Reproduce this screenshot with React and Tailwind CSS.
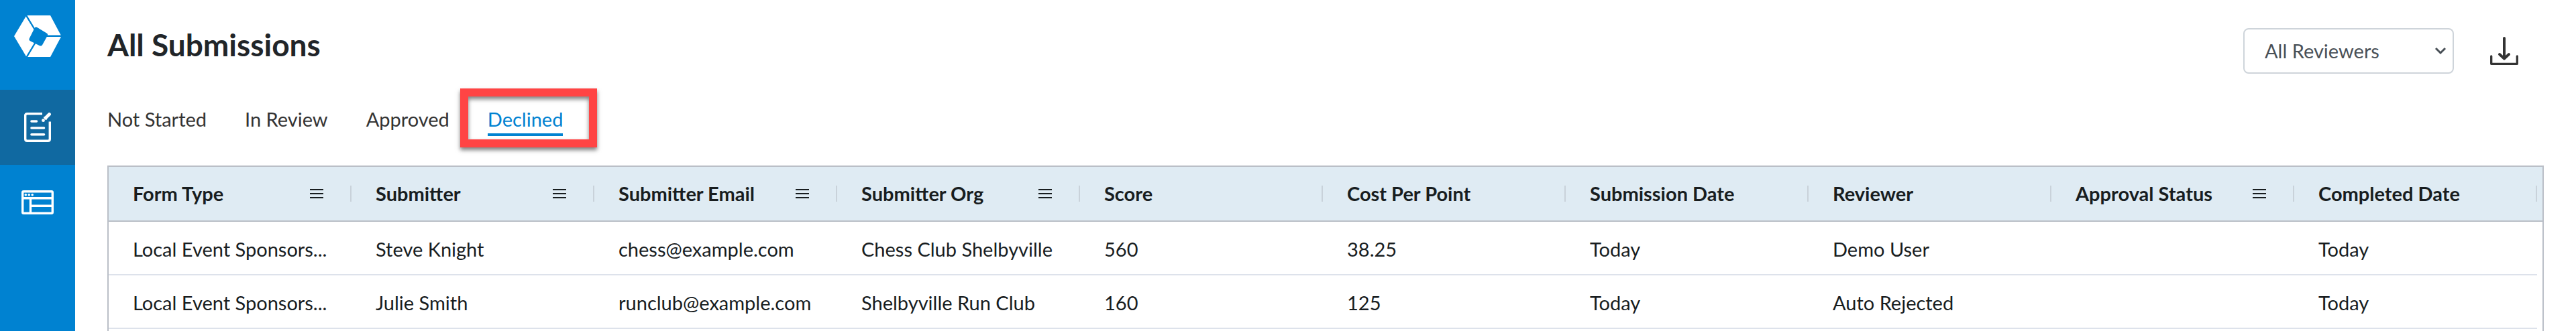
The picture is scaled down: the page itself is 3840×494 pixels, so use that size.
import React, { useState } from "react";

const columns = [
  { key: "formType", label: "Form Type", menu: true },
  { key: "submitter", label: "Submitter", menu: true },
  { key: "email", label: "Submitter Email", menu: true },
  { key: "org", label: "Submitter Org", menu: true },
  { key: "score", label: "Score" },
  { key: "cost", label: "Cost Per Point" },
  { key: "submitted", label: "Submission Date" },
  { key: "reviewer", label: "Reviewer" },
  { key: "approval", label: "Approval Status", menu: true },
  { key: "completed", label: "Completed Date" },
];

const rows = [
  {
    formType: "Local Event Sponsors...",
    submitter: "Steve Knight",
    email: "chess@example.com",
    org: "Chess Club Shelbyville",
    score: "560",
    cost: "38.25",
    submitted: "Today",
    reviewer: "Demo User",
    approval: "",
    completed: "Today",
  },
  {
    formType: "Local Event Sponsors...",
    submitter: "Julie Smith",
    email: "runclub@example.com",
    org: "Shelbyville Run Club",
    score: "160",
    cost: "125",
    submitted: "Today",
    reviewer: "Auto Rejected",
    approval: "",
    completed: "Today",
  },
];

const tabs = ["Not Started", "In Review", "Approved", "Declined"];

const Logo = () => (
  <svg width="72" height="64" viewBox="19 22 72 64" aria-hidden="true">
    <path d="M38.5 23H74L90.5 54L74 85H38.5L20 54Z" fill="#fff" />
    <path
      d="M36.5 20.5L52 46M66 53.7H92M52 63L37 88"
      stroke="#0082d1"
      strokeWidth="2.4"
    />
    <path
      d="M53 43.5L67 52L59.5 65.5L45.5 58.5Z"
      fill="#0082d1"
      stroke="#0082d1"
      strokeWidth="6"
      strokeLinejoin="round"
    />
  </svg>
);

const FormIcon = () => (
  <svg
    width="40"
    height="44"
    viewBox="0 0 40 44"
    fill="none"
    stroke="#fff"
    aria-hidden="true"
  >
    <path
      d="M27 1.7H4.5Q1.7 1.7 1.7 4.5V39.5Q1.7 42.3 4.5 42.3H35.5Q38.3 42.3 38.3 39.5V13.5"
      strokeWidth="3.4"
    />
    <path
      d="M11 13H18.5M11 23H29.5M11 32.7H29.5"
      strokeWidth="3.6"
      strokeLinecap="round"
    />
    <path d="M32 8L37.5 2.5" strokeWidth="4.8" strokeLinecap="round" />
    <path d="M29.5 6.5L33.5 10.5" strokeWidth="2" />
    <circle cx="28.5" cy="11.7" r="2.4" fill="#fff" stroke="none" />
  </svg>
);

const LayoutIcon = () => (
  <svg
    width="48"
    height="36"
    viewBox="0 0 48 36"
    fill="none"
    stroke="#fff"
    strokeWidth="3.4"
    aria-hidden="true"
  >
    <rect x="1.7" y="1.7" width="44.6" height="32.6" rx="1.5" />
    <path d="M2 11.7H46M13.5 12V34M14 23.3H46" />
    <g fill="#fff" stroke="none">
      <circle cx="6.3" cy="6.8" r="1.8" />
      <circle cx="11.3" cy="6.8" r="1.8" />
      <circle cx="16.2" cy="6.8" r="1.8" />
    </g>
  </svg>
);

const MenuIcon = () => (
  <svg width="20" height="14" viewBox="0 0 20 14" aria-hidden="true">
    <path d="M0 1H20M0 7H20M0 13H20" stroke="#181d1f" strokeWidth="2" />
  </svg>
);

const DownloadIcon = () => (
  <svg
    width="42"
    height="42"
    viewBox="0 0 42 42"
    fill="none"
    stroke="#333"
    strokeLinecap="round"
    strokeLinejoin="round"
    aria-hidden="true"
  >
    <path d="M1.7 29V40.3H40.3V29" strokeWidth="3.3" />
    <path d="M21 2V32M14 26L21 32.5L28 26" strokeWidth="4" />
  </svg>
);

const Sidebar = () => (
  <nav className="w-28 shrink-0 bg-[#0082d1]">
    <a href="#home" aria-label="Home" className="flex h-[134px] justify-center pt-[22px]">
      <Logo />
    </a>
    <a
      href="#submissions"
      aria-label="Submissions"
      className="flex h-28 items-center justify-center bg-[#1069a1]"
    >
      <FormIcon />
    </a>
    <a
      href="#forms"
      aria-label="Forms"
      className="flex h-28 items-center justify-center"
    >
      <LayoutIcon />
    </a>
  </nav>
);

const App = () => {
  const [activeTab, setActiveTab] = useState("Declined");

  return (
    <div className="flex min-h-screen bg-white font-['Lato',sans-serif] text-[29px] leading-9 text-[#181d1f]">
      <Sidebar />
      <main className="flex min-w-0 flex-1 flex-col px-12 pt-[42px]">
        <header className="flex items-start justify-between">
          <h1 className="text-[46px] font-bold leading-[50px] text-[#212529]">
            All Submissions
          </h1>
          <div className="flex items-center gap-[54px] pr-[38px]">
            <div className="relative">
              <select
                aria-label="Reviewer"
                className="h-[68px] w-[314px] appearance-none rounded-lg border-2 border-[#ced4da] bg-white pl-[30px] text-[#495057]"
              >
                <option>All Reviewers</option>
              </select>
              <svg
                width="18"
                height="12"
                viewBox="0 0 18 12"
                className="pointer-events-none absolute top-7 right-[11px]"
                aria-hidden="true"
              >
                <path
                  d="M2 2L9 9L16 2"
                  fill="none"
                  stroke="#495057"
                  strokeWidth="3"
                />
              </svg>
            </div>
            <button aria-label="Download">
              <DownloadIcon />
            </button>
          </div>
        </header>

        <div className="mt-[50px] flex gap-[57px]">
          {tabs.map((tab) => (
            <button
              key={tab}
              onClick={() => setActiveTab(tab)}
              className={`relative border-b-4 pb-[3px] ${
                tab === activeTab
                  ? "border-[#0082d1] text-[#0082d1]"
                  : "border-transparent text-[#333]"
              }`}
            >
              {tab}
              {tab === "Declined" && (
                <span className="pointer-events-none absolute -top-7 -right-[51px] -bottom-[21px] -left-[41px] border-12 border-[#ff4444] shadow-[0_4px_6px_rgba(0,0,0,0.5),inset_0_4px_6px_rgba(0,0,0,0.5)]" />
              )}
            </button>
          ))}
        </div>

        <div className="mt-11 flex-1 border-2 border-b-0 border-[#babfc7]">
          <table className="w-full table-fixed border-separate border-spacing-0 text-left">
            <thead className="bg-[#dfebf3]">
              <tr>
                {columns.map((col) => (
                  <th
                    key={col.key}
                    className="h-[82px] border-b-2 border-[#babfc7] p-0 pl-9 font-bold whitespace-nowrap"
                  >
                    <div className="flex items-center justify-between">
                      <span>{col.label}</span>
                      <div className="flex items-center gap-10">
                        {col.menu && (
                          <button aria-label={`${col.label} menu`}>
                            <MenuIcon />
                          </button>
                        )}
                        <span className="h-6 w-[2px] bg-[#c9d2da]" />
                      </div>
                    </div>
                  </th>
                ))}
                <th className="w-2 border-b-2 border-[#babfc7] p-0" />
              </tr>
            </thead>
            <tbody>
              {rows.map((row, index) => (
                <tr key={index}>
                  {columns.map((col) => (
                    <td
                      key={col.key}
                      className="h-20 border-b-2 border-[#dde2eb] p-0 pt-1 pl-9 whitespace-nowrap"
                    >
                      {row[col.key]}
                    </td>
                  ))}
                </tr>
              ))}
            </tbody>
          </table>
        </div>
      </main>
    </div>
  );
};

export default App;
